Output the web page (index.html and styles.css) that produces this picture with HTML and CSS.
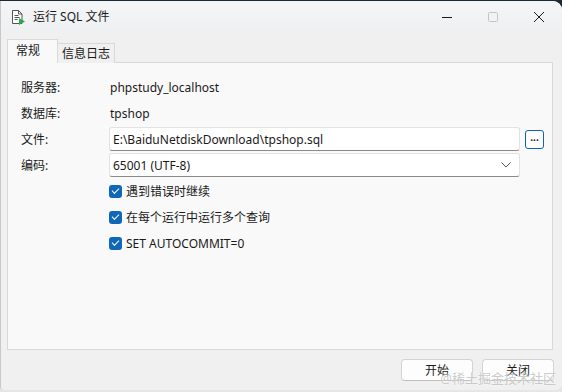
FILE: index.html
```html
<!DOCTYPE html>
<html lang="zh-CN">
<head>
    <meta charset="UTF-8">
    <title>运行 SQL 文件</title>
    <link rel="stylesheet" href="styles.css">
</head>
<body>
    <div class="window">
        <div class="titlebar">
            <svg class="app-icon" width="16" height="16" viewBox="0 0 16 16">
                <path d="M2.5 1.5h6l3.5 3.5v9.5h-9.5z" fill="#fff" stroke="#555" stroke-width="1"/>
                <path d="M8.5 1.5v3.5h3.5" fill="none" stroke="#555" stroke-width="1"/>
                <path d="M4.5 6.5h4M4.5 8.5h5M4.5 10.5h3" stroke="#555" stroke-width="1"/>
                <path d="M9 9l6 3.5-6 3.5z" fill="#2ea84a"/>
            </svg>
            <span class="title">运行 SQL 文件</span>
            <div class="controls">
                <div class="ctl">
                    <svg width="10" height="10" viewBox="0 0 10 10"><path d="M0 5.5h10" stroke="#1a1a1a" stroke-width="1"/></svg>
                </div>
                <div class="ctl">
                    <svg width="10" height="10" viewBox="0 0 10 10"><rect x="0.5" y="0.5" width="9" height="9" rx="1" fill="none" stroke="#c4c4c4"/></svg>
                </div>
                <div class="ctl">
                    <svg width="10" height="10" viewBox="0 0 10 10"><path d="M0 0l10 10M10 0l-10 10" stroke="#1a1a1a" stroke-width="1"/></svg>
                </div>
            </div>
        </div>

        <div class="tabs">
            <div class="tab active">常规</div>
            <div class="tab">信息日志</div>
        </div>

        <div class="panel">
            <div class="form">
                <div class="label">服务器:</div>
                <div class="value">phpstudy_localhost</div>

                <div class="label">数据库:</div>
                <div class="value">tpshop</div>

                <div class="label">文件:</div>
                <div class="field-row">
                    <div class="input">E:\BaiduNetdiskDownload\tpshop.sql</div>
                    <div class="browse">...</div>
                </div>

                <div class="label">编码:</div>
                <div class="field-row">
                    <div class="input select">
                        <span>65001 (UTF-8)</span>
                        <svg width="10" height="6" viewBox="0 0 10 6"><path d="M0.5 0.5l4.5 4.5 4.5-4.5" fill="none" stroke="#555" stroke-width="1"/></svg>
                    </div>
                </div>

                <div></div>
                <label class="check"><span class="box"></span>遇到错误时继续</label>

                <div></div>
                <label class="check"><span class="box"></span>在每个运行中运行多个查询</label>

                <div></div>
                <label class="check"><span class="box"></span>SET AUTOCOMMIT=0</label>
            </div>
        </div>

        <div class="footer">
            <button class="btn">开始</button>
            <button class="btn">关闭</button>
        </div>

        <div class="watermark">@稀土掘金技术社区</div>
    </div>
</body>
</html>
```

FILE: styles.css
```css
body {
    margin: 0;
    width: 562px;
    height: 392px;
    overflow: hidden;
    background: linear-gradient(#1c2a35 0, #1c2a35 14px, #e6e6e6 14px);
    font-family: "Noto Sans", "Noto Sans CJK SC", sans-serif;
    font-size: 12px;
    color: #1a1a1a;
}

.window {
    position: relative;
    margin-top: 1px;
    width: 561px;
    height: 389px;
    background-color: #f0f0f0;
    border-left: 1px solid #c8c8c8;
    border-radius: 0 9px 7px 4px;
    overflow: hidden;
}

.titlebar {
    display: flex;
    align-items: center;
    height: 31px;
    background: linear-gradient(#f4f5f7, #eff0f1);
}

.app-icon {
    margin: 1px 0 0 9px;
}

.title {
    margin-left: 7px;
    line-height: 16px;
}

.controls {
    display: flex;
    margin-left: auto;
}

.ctl {
    display: flex;
    align-items: center;
    justify-content: center;
    width: 46px;
    height: 31px;
}

/* Tabs */
.tabs {
    display: flex;
    align-items: flex-end;
    height: 24px;
    margin: 6px 9px 0 6px;
}

.tab {
    height: 19px;
    padding: 0 4px 0 4px;
    line-height: 19px;
    background-color: #f0f0f0;
    border: 1px solid #d9d9d9;
    border-bottom: none;
    margin-bottom: -1px;
}

.tab.active {
    position: relative;
    z-index: 1;
    height: 23px;
    line-height: 22px;
    padding: 0 17px 0 8px;
    background-color: #f9f9f9;
}

.tab + .tab {
    border-left: none;
}

.panel {
    height: 286px;
    margin: 0 9px 0 6px;
    background-color: #f9f9f9;
    border: 1px solid #d9d9d9;
}

.form {
    display: grid;
    grid-template-columns: 88px 1fr;
    grid-auto-rows: 26px;
    align-items: center;
    padding: 11px 0 0 13px;
}

.value {
    padding-left: 1px;
}

.field-row {
    display: flex;
    align-items: center;
    gap: 5px;
}

.input {
    display: flex;
    align-items: center;
    box-sizing: border-box;
    width: 411px;
    height: 24px;
    padding: 0 8px 0 3px;
    background-color: #fff;
    border: 1px solid #e2e2e2;
    border-bottom-color: #8a8a8a;
    border-radius: 3px;
}

.select {
    justify-content: space-between;
}

.browse {
    box-sizing: border-box;
    width: 19px;
    height: 19px;
    background-color: #fff;
    border: 1px solid #0a64b4;
    border-radius: 3px;
    font-size: 10px;
    font-weight: bold;
    line-height: 12px;
    text-align: center;
}

.check {
    display: flex;
    align-items: center;
    gap: 4px;
}

.box {
    position: relative;
    width: 13px;
    height: 13px;
    background-color: #0f67b9;
    border-radius: 3px;
}

.box::after {
    content: "";
    position: absolute;
    left: 3px;
    top: 3px;
    width: 6px;
    height: 3px;
    border-left: 1.3px solid #fff;
    border-bottom: 1.3px solid #fff;
    transform: rotate(-45deg);
}

/* Bottom buttons */
.footer {
    display: flex;
    justify-content: flex-end;
    gap: 9px;
    padding: 9px 8px 0 0;
}

.btn {
    width: 72px;
    height: 22px;
    padding: 0;
    background-color: #fdfdfd;
    border: 1px solid #d3d3d3;
    border-bottom-color: #bdbdbd;
    border-radius: 4px;
    font-family: inherit;
    font-size: 12px;
    color: #1a1a1a;
}

.watermark {
    position: absolute;
    right: 6px;
    bottom: 3px;
    font-size: 13px;
    color: rgba(160, 160, 160, 0.55);
    text-shadow: 0 0 2px #fff;
}
```
